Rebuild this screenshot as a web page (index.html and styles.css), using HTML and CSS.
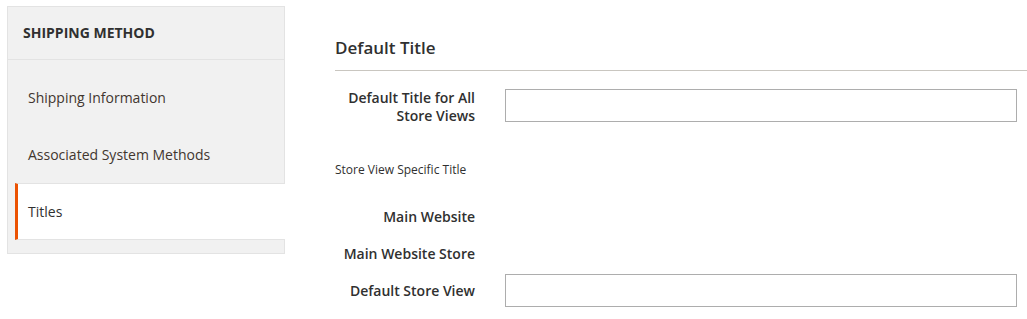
FILE: index.html
```html
<!DOCTYPE html>
<html>
<head>
<meta charset="utf-8">
<link rel="stylesheet" href="styles.css">
</head>
<body>
<div class="page">
  <aside class="nav">
    <div class="nav-title">Shipping Method</div>
    <ul class="nav-list">
      <li class="nav-item">Shipping Information</li>
      <li class="nav-item">Associated System Methods</li>
      <li class="nav-item active">Titles</li>
    </ul>
  </aside>
  <main class="content">
    <h2 class="legend">Default Title</h2>
    <div class="row row-first">
      <label class="label">Default Title for All Store Views</label>
      <div class="input"></div>
    </div>
    <div class="subtitle">Store View Specific Title</div>
    <div class="row row-website">
      <label class="label">Main Website</label>
    </div>
    <div class="row">
      <label class="label">Main Website Store</label>
    </div>
    <div class="row">
      <label class="label">Default Store View</label>
      <div class="input"></div>
    </div>
  </main>
</div>
</body>
</html>
```
FILE: styles.css
```css
html, body {
  margin: 0;
  padding: 0;
  background: #fff;
}
body {
  font-family: "Open Sans", "Liberation Sans", sans-serif;
  color: #303030;
}
.page {
  display: flex;
  align-items: flex-start;
}
.nav {
  box-sizing: border-box;
  width: 278px;
  margin: 6px 0 0 7px;
  background: #f1f1f1;
  border: 1px solid #e3e3e3;
  padding-bottom: 13px;
}
.nav-title {
  font-size: 14px;
  font-weight: 700;
  text-transform: uppercase;
  line-height: 17px;
  padding: 17px 15px 18px;
  border-bottom: 1px solid #e3e3e3;
  color: #303030;
}
.nav-list {
  list-style: none;
  margin: 0;
  padding: 9px 0 0;
}
.nav-item {
  box-sizing: border-box;
  height: 57px;
  margin-left: 7px;
  margin-right: -1px;
  padding: 20px 10px 0;
  border-left: 3px solid transparent;
  font-size: 14px;
  line-height: 17px;
  color: #41362f;
}
.nav-item.active {
  background: #fff;
  border-left-color: #eb5202;
  border-top: 1px solid #e3e3e3;
  border-bottom: 1px solid #e3e3e3;
  padding-top: 19px;
  color: #303030;
}
.content {
  flex: 1;
  margin-left: 50px;
  padding-top: 38px;
}
.legend {
  margin: 0;
  font-size: 17px;
  font-weight: 600;
  line-height: 20px;
  padding-bottom: 12px;
  border-bottom: 1px solid #c9c6c0;
  color: #303030;
}
.row {
  display: flex;
  align-items: center;
  min-height: 33px;
  margin-top: 4px;
}
.row-first {
  align-items: flex-start;
  margin-top: 18px;
}
.label {
  box-sizing: border-box;
  width: 170px;
  flex: none;
  padding-right: 30px;
  text-align: right;
  font-size: 14px;
  font-weight: 600;
  line-height: 18px;
  color: #303030;
}
.input {
  box-sizing: border-box;
  width: 512px;
  height: 33px;
  border: 1px solid #adadad;
  background: #fff;
}
.subtitle {
  margin-top: 37px;
  font-size: 12px;
  line-height: 16px;
  color: #303030;
}
.row-website {
  margin-top: 22px;
}
```
